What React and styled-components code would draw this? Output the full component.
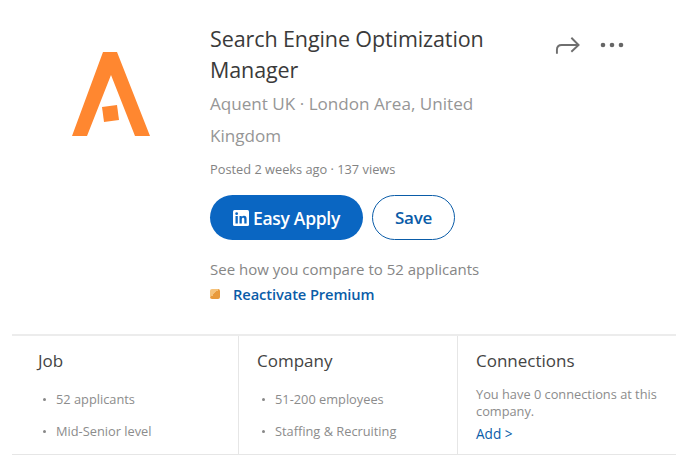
import styled, { createGlobalStyle } from "styled-components";

const GlobalStyle = createGlobalStyle`
  html, body {
    margin: 0;
    background: #fff;
  }
  body {
    font-family: "Open Sans", "Noto Sans", sans-serif;
  }
`;

const Page = styled.div`
  width: 686px;
  height: 465px;
  overflow: hidden;
  box-sizing: border-box;
  padding: 0 10px 0 12px;
`;

const Top = styled.div`
  display: flex;
  height: 336px;
  box-sizing: border-box;
  padding-top: 23px;
  border-bottom: 2px solid #ececec;
`;

const LogoBox = styled.div`
  width: 198px;
  flex: none;
  padding: 29px 0 0 59px;
  box-sizing: border-box;
`;

const Main = styled.div`
  flex: 1;
  min-width: 0;
`;

const TitleRow = styled.div`
  display: flex;
  align-items: flex-start;
  justify-content: space-between;
`;

const Title = styled.h1`
  margin: 0;
  width: 320px;
  font-size: 21.5px;
  line-height: 31px;
  font-weight: 400;
  letter-spacing: -0.1px;
  color: #3a3a3a;
`;

const Actions = styled.div`
  display: flex;
  align-items: center;
  gap: 20px;
  padding: 12px 52px 0 0;
`;

const Subtitle = styled.div`
  width: 300px;
  margin-top: 3px;
  font-size: 17.1px;
  line-height: 32px;
  color: #969696;
`;

const Meta = styled.div`
  margin-top: 8px;
  font-size: 12.8px;
  line-height: 18px;
  color: #838383;
`;

const Buttons = styled.div`
  display: flex;
  gap: 9px;
  margin-top: 17px;
`;

const ApplyButton = styled.button`
  display: flex;
  align-items: center;
  justify-content: center;
  gap: 4px;
  width: 153px;
  height: 45px;
  padding: 0;
  border: 0;
  border-radius: 23px;
  background: #0a66c2;
  color: #fff;
  font: 600 17.5px "Open Sans", sans-serif;
  letter-spacing: -0.3px;
`;

const SaveButton = styled.button`
  width: 83px;
  height: 45px;
  padding: 0;
  border: 1px solid #0a5ca8;
  border-radius: 23px;
  background: #fff;
  color: #0a5ca8;
  font: 600 17px "Open Sans", sans-serif;
  letter-spacing: -0.3px;
`;

const Compare = styled.div`
  margin-top: 19px;
  font-size: 15px;
  line-height: 20px;
  color: #868686;
`;

const PremiumRow = styled.div`
  display: flex;
  align-items: center;
  gap: 13px;
  margin-top: 5px;
`;

const PremiumIcon = styled.span`
  width: 10px;
  height: 10px;
  border-radius: 2px;
  background: linear-gradient(135deg, #f5c27a 0 45%, #e89a3c 45% 100%);
`;

const PremiumLink = styled.a`
  font-size: 14.7px;
  line-height: 20px;
  font-weight: 600;
  letter-spacing: -0.1px;
  color: #0a5ca8;
`;

const Columns = styled.div`
  display: grid;
  grid-template-columns: 227px 219px 1fr;
  height: 118px;
  border-bottom: 1px solid #e6e6e6;
`;

const Column = styled.section`
  box-sizing: border-box;
  padding: 13px 0 0 ${(props) => props.$inset}px;
  border-right: ${(props) => (props.$last ? "0" : "1px solid #e6e6e6")};
`;

const ColumnTitle = styled.h2`
  margin: 0;
  font-size: 17px;
  line-height: 24px;
  font-weight: 400;
  color: #444;
`;

const Facts = styled.ul`
  list-style: none;
  margin: 10px 0 0;
  padding: 0 0 0 5px;
`;

const Fact = styled.li`
  display: flex;
  align-items: center;
  gap: 10px;
  height: 32px;
  font-size: 12.8px;
  color: #8c8c8c;
  &::before {
    content: "";
    width: 3px;
    height: 3px;
    border-radius: 50%;
    background: #888;
  }
`;

const Note = styled.p`
  margin: 13px 0 0;
  width: 195px;
  font-size: 12.8px;
  line-height: 17px;
  color: #8c8c8c;
`;

const AddLink = styled.a`
  display: block;
  margin-top: 5px;
  font-size: 13.6px;
  line-height: 17px;
  font-weight: 500;
  color: #0a5ca8;
`;

const Logo = () => (
  <svg width="80" height="86" viewBox="0 0 80 86" aria-hidden="true">
    <path d="M32 0H46L79 84H64L40 23L16 84H1Z" fill="#ff8730" />
    <path d="M31 55L46 53L48 68L33 70Z" fill="#ff8730" />
  </svg>
);

const ShareIcon = () => (
  <svg width="25" height="20" viewBox="0 0 26 20" fill="none" stroke="#6f6f6f" strokeWidth="2" aria-hidden="true">
    <path d="M2 19V15C2 11.500 4 10 7 10H24" />
    <path d="M17 2.500L24.500 10L17 17" />
  </svg>
);

const MoreIcon = () => (
  <svg width="24" height="6" viewBox="0 0 24 6" fill="#666" aria-hidden="true">
    <circle cx="3" cy="3" r="2.300" />
    <circle cx="12" cy="3" r="2.300" />
    <circle cx="21" cy="3" r="2.300" />
  </svg>
);

const InIcon = () => (
  <svg width="16" height="16" viewBox="0 0 16 16" aria-hidden="true">
    <rect width="16" height="16" rx="1.500" fill="#fff" />
    <rect x="2.500" y="6" width="2.300" height="7.500" fill="#0a66c2" />
    <circle cx="3.650" cy="3.700" r="1.400" fill="#0a66c2" />
    <path d="M6.500 6H8.700V7C9.200 6.200 10 5.800 11 5.800C12.800 5.800 13.600 6.900 13.600 8.800V13.500H11.300V9.300C11.300 8.300 10.900 7.800 10.100 7.800C9.300 7.800 8.800 8.400 8.800 9.400V13.500H6.500Z" fill="#0a66c2" />
  </svg>
);

export default function App() {
  return (
    <>
      <GlobalStyle />
      <Page>
        <Top>
          <LogoBox>
            <Logo />
          </LogoBox>
          <Main>
            <TitleRow>
              <Title>Search Engine Optimization Manager</Title>
              <Actions>
                <ShareIcon />
                <MoreIcon />
              </Actions>
            </TitleRow>
            <Subtitle>Aquent UK · London Area, United Kingdom</Subtitle>
            <Meta>Posted 2 weeks ago · 137 views</Meta>
            <Buttons>
              <ApplyButton>
                <InIcon />
                Easy Apply
              </ApplyButton>
              <SaveButton>Save</SaveButton>
            </Buttons>
            <Compare>See how you compare to 52 applicants</Compare>
            <PremiumRow>
              <PremiumIcon />
              <PremiumLink>Reactivate Premium</PremiumLink>
            </PremiumRow>
          </Main>
        </Top>
        <Columns>
          <Column $inset={26}>
            <ColumnTitle>Job</ColumnTitle>
            <Facts>
              <Fact>52 applicants</Fact>
              <Fact>Mid-Senior level</Fact>
            </Facts>
          </Column>
          <Column $inset={18}>
            <ColumnTitle>Company</ColumnTitle>
            <Facts>
              <Fact>51-200 employees</Fact>
              <Fact>Staffing &amp; Recruiting</Fact>
            </Facts>
          </Column>
          <Column $inset={18} $last>
            <ColumnTitle>Connections</ColumnTitle>
            <Note>You have 0 connections at this company.</Note>
            <AddLink>Add &gt;</AddLink>
          </Column>
        </Columns>
      </Page>
    </>
  );
}
